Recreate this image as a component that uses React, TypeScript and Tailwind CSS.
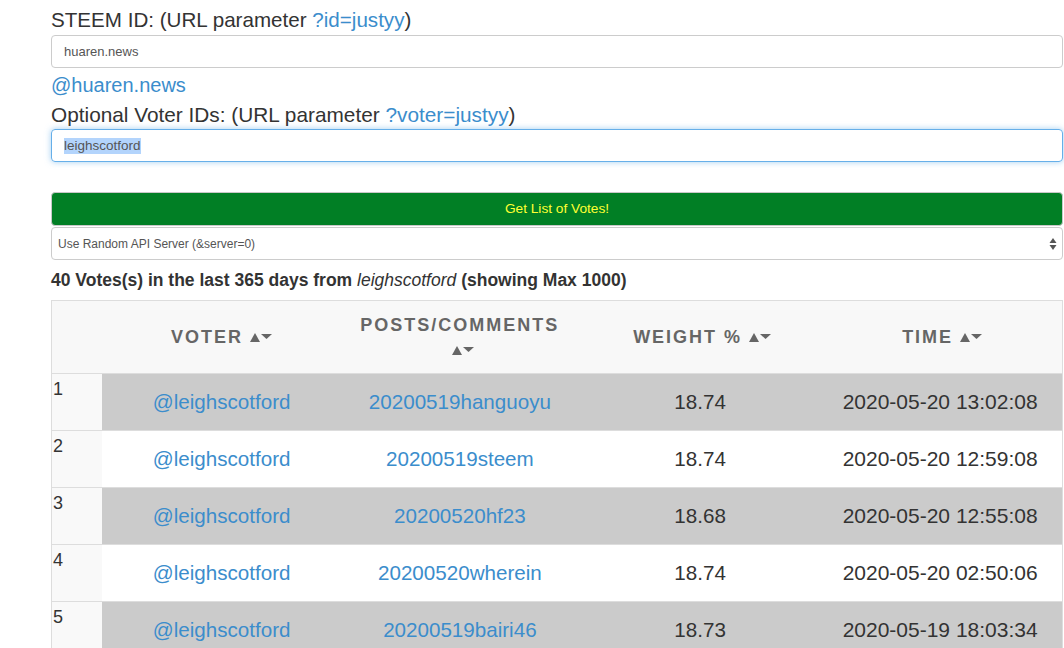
import React from "react";

const rows = [
  ["1", "@leighscotford", "20200519hanguoyu", "18.74", "2020-05-20 13:02:08"],
  ["2", "@leighscotford", "20200519steem", "18.74", "2020-05-20 12:59:08"],
  ["3", "@leighscotford", "20200520hf23", "18.68", "2020-05-20 12:55:08"],
  ["4", "@leighscotford", "20200520wherein", "18.74", "2020-05-20 02:50:06"],
  ["5", "@leighscotford", "20200519bairi46", "18.73", "2020-05-19 18:03:34"],
];

function Arrows() {
  return (
    <span className="inline-flex items-center ml-[7px] align-middle relative top-[-1px]">
      <svg width="10" height="9" viewBox="0 0 10 9" className="block">
        <path d="M5 0 L10 9 L0 9 Z" fill="#666" />
      </svg>
      <svg width="11" height="9" viewBox="0 0 11 9" className="block ml-[1px]">
        <path d="M0 1 L11 1 L5.5 6 Z" fill="#666" />
      </svg>
    </span>
  );
}

export default function App() {
  return (
    <div
      className="pl-[51px] pr-[1px] text-[#333] bg-white min-h-[648px]"
      style={{ fontFamily: '"Liberation Sans", Arial, Helvetica, sans-serif' }}
    >
      <div className="pt-[6px] text-[20.6px] leading-[28px]">
        STEEM ID: (URL parameter <a className="text-[#3b8dcc]">?id=justyy</a>)
      </div>
      <div className="mt-[1px] h-[33px] border border-[#cccccc] rounded-[4px] flex items-center pl-[12px] text-[13px] text-[#555]">
        huaren.news
      </div>
      <div className="mt-[3px] text-[20px] leading-[28px]">
        <a className="text-[#3b8dcc]">@huaren.news</a>
      </div>
      <div className="mt-[2px] text-[20.8px] leading-[28px]">
        Optional Voter IDs: (URL parameter <a className="text-[#3b8dcc]">?voter=justyy</a>)
      </div>
      <div className="h-[33px] border border-[#66afe9] rounded-[4px] flex items-center pl-[12px] text-[13.5px] text-[#555] shadow-[0_0_6px_rgba(102,175,233,0.6)]">
        <span className="bg-[#b3d4fc] leading-[16px]">leighscotford</span>
      </div>
      <div className="mt-[30px] h-[34px] bg-[#017f25] border border-[#c8c8c8] rounded-[4px] flex items-center justify-center text-[13.7px] text-[#ffff33]">
        Get List of Votes!
      </div>
      <div className="mt-[1px] h-[33px] border border-[#cccccc] rounded-[4px] flex items-center justify-between pl-[6px] pr-[5px] text-[12px] text-[#555]">
        <span>Use Random API Server (&amp;server=0)</span>
        <svg width="8" height="14" viewBox="0 0 8 14">
          <path d="M4 1 L7.5 6 L0.5 6 Z" fill="#555" />
          <path d="M0.5 8 L7.5 8 L4 13 Z" fill="#555" />
        </svg>
      </div>
      <div className="mt-[9px] text-[17.5px] leading-[22px] font-bold">
        40 Votes(s) in the last 365 days from <i className="font-normal">leighscotford</i> (showing Max 1000)
      </div>
      <table className="mt-[9px] w-full table-fixed border-collapse border border-[#dddddd]">
        <colgroup>
          <col className="w-[50px]" />
          <col />
          <col />
          <col />
          <col />
        </colgroup>
        <thead>
          <tr className="bg-[#f8f8f8] h-[73px]">
            <th className="border-b border-[#dddddd]"></th>
            <th className="text-center align-middle text-[18px] font-bold tracking-[2px] text-[#666] leading-[26px]">
              VOTER<Arrows />
            </th>
            <th className="text-center align-middle text-[18px] font-bold tracking-[2px] text-[#666] leading-[26px] pt-[1px] pr-[4px]">
              POSTS/COMMENTS
              <br />
              <Arrows />
            </th>
            <th className="text-center align-middle text-[18px] font-bold tracking-[2px] text-[#666] leading-[26px]">
              WEIGHT %<Arrows />
            </th>
            <th className="text-center align-middle text-[18px] font-bold tracking-[2px] text-[#666] leading-[26px]">
              TIME<Arrows />
            </th>
          </tr>
        </thead>
        <tbody>
          {rows.map((r, i) => {
            const bg = i % 2 === 0 ? "bg-[#cbcbcb]" : "bg-white";
            return (
              <tr key={r[0]} className="h-[57px] border-t border-[#dddddd]">
                <td className="bg-[#f9f9f9] align-top pl-[1px] pt-[5px] text-[18px] leading-[21px] text-[#333]">
                  {r[0]}
                </td>
                <td className={`${bg} text-center align-middle text-[20.6px] text-[#3b8dcc]`}>{r[1]}</td>
                <td className={`${bg} text-center align-middle text-[20.6px] text-[#3b8dcc] pr-[4px]`}>{r[2]}</td>
                <td className={`${bg} text-center align-middle text-[20.6px] text-[#333] pr-[4px]`}>{r[3]}</td>
                <td className={`${bg} text-center align-middle text-[21px] text-[#333] pr-[4px]`}>{r[4]}</td>
              </tr>
            );
          })}
        </tbody>
      </table>
    </div>
  );
}
